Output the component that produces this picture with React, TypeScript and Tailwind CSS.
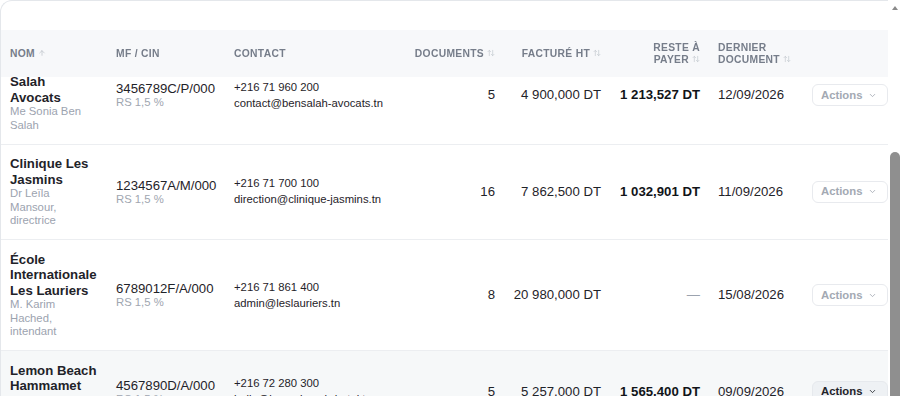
import { useLayoutEffect, useRef } from 'react';
import { ArrowUp, ArrowUpDown, ChevronDown } from 'lucide-react';

type Client = {
  name: string;
  contact: string;
  mf: string;
  phone: string;
  email: string;
  docs: number;
  billed: string;
  due: string | null;
  last: string;
};

const CLIENTS: Client[] = [
  { name: 'Cabinet Ben Salah Avocats', contact: 'Me Sonia Ben Salah', mf: '3456789C/P/000', phone: '+216 71 960 200', email: 'contact@bensalah-avocats.tn', docs: 5, billed: '4 900,000 DT', due: '1 213,527 DT', last: '12/09/2026' },
  { name: 'Clinique Les Jasmins', contact: 'Dr Leïla Mansour, directrice', mf: '1234567A/M/000', phone: '+216 71 700 100', email: 'direction@clinique-jasmins.tn', docs: 16, billed: '7 862,500 DT', due: '1 032,901 DT', last: '11/09/2026' },
  { name: 'École Internationale Les Lauriers', contact: 'M. Karim Hached, intendant', mf: '6789012F/A/000', phone: '+216 71 861 400', email: 'admin@leslauriers.tn', docs: 8, billed: '20 980,000 DT', due: null, last: '15/08/2026' },
  { name: 'Lemon Beach Hammamet', contact: 'M. Sami Chebbi, directeur général', mf: '4567890D/A/000', phone: '+216 72 280 300', email: 'hello@lemonbeach-hotel.tn', docs: 5, billed: '5 257,000 DT', due: '1 565,400 DT', last: '09/09/2026' },
  { name: 'Pharmacie Centrale El Menzah', contact: 'Dr Amel Trabelsi', mf: '7890123G/P/000', phone: '+216 71 230 455', email: 'pharmacie@elmenzah.tn', docs: 4, billed: '2 640,000 DT', due: '320,000 DT', last: '03/09/2026' },
];

const HOVERED = 3;

function SortIcon() {
  return <ArrowUpDown size={8} strokeWidth={2} className="inline-block ml-[3px] -mt-[2px] text-[#c3c8cf]" />;
}

function Row({ c, hovered }: { c: Client; hovered: boolean }) {
  return (
    <tr className={`border-b border-[#eceef1] ${hovered ? 'bg-[#f6f8f9]' : 'bg-white'}`}>
      <td className="px-[9px] py-[11.5px] align-middle">
        <div className="text-[13.2px] leading-[15.5px] font-bold text-[#1f2329]">{c.name}</div>
        <div className="text-[11.3px] leading-[13.5px] text-[#9ca3af]">{c.contact}</div>
      </td>
      <td className="px-[9px] align-middle">
        <div className="text-[13.2px] leading-[15px] text-[#1f2329]">{c.mf}</div>
        <div className="text-[11.3px] leading-[13px] text-[#a0a6b0]">RS 1,5 %</div>
      </td>
      <td className="px-[9px] align-middle text-[11.3px] leading-[13px] text-[#1f2329]">
        <div>{c.phone}</div>
        <div className="mt-[3px]">{c.email}</div>
      </td>
      <td className="px-[9px] align-middle text-right text-[13.2px] text-[#1f2329]">{c.docs}</td>
      <td className="px-[9px] align-middle text-right text-[13.2px] text-[#1f2329] whitespace-nowrap">{c.billed}</td>
      <td className="px-[9px] align-middle text-right text-[13.2px] whitespace-nowrap">
        {c.due ? <span className="font-bold text-[#111418]">{c.due}</span> : <span className="text-[#9ca3af]">—</span>}
      </td>
      <td className="px-[9px] align-middle text-[13.2px] text-[#1f2329]">{c.last}</td>
      <td className="px-[9px] align-middle">
        <button
          className={`h-[22px] flex items-center gap-[6px] pl-[8px] pr-[10px] rounded-md border text-[11.3px] font-bold ${
            hovered ? 'bg-[#eef1f4] border-[#e6e9ed] text-[#1f2329]' : 'bg-white border-[#e8eaee] text-[#a3a9b3]'
          }`}
        >
          Actions
          <ChevronDown size={9} strokeWidth={2.2} />
        </button>
      </td>
    </tr>
  );
}

// page scroll indicator on the right edge
function ScrollTrack() {
  return (
    <div className="w-[12px] shrink-0 bg-white flex flex-col items-center">
      <div className="mt-[6px] ml-[2px] w-0 h-0 border-x-[3.5px] border-x-transparent border-b-[4px] border-b-[#8a8a8a]" />
      <div className="mt-[142px] ml-[2px] w-[10px] h-[260px] rounded-t-[5px] bg-[#8f8f8f]" />
    </div>
  );
}

export default function App() {
  const scrollRef = useRef<HTMLDivElement>(null);
  const bodyRef = useRef<HTMLTableSectionElement>(null);

  useLayoutEffect(() => {
    const box = scrollRef.current;
    const body = bodyRef.current;
    if (!box || !body) return;
    box.scrollTop = body.getBoundingClientRect().top - box.getBoundingClientRect().top - 46.5;
  }, []);

  const th = 'px-[9px] py-3 align-middle text-[10.3px] leading-[11.5px] font-bold uppercase tracking-[0.03em] text-[#767d8a]';

  return (
    <div className="h-[396px] flex overflow-hidden bg-white font-['Liberation_Sans',Arial,sans-serif]">
      <div ref={scrollRef} className="flex-1 min-w-0 overflow-y-auto overflow-x-hidden [scrollbar-width:none]">
        <div className="w-[924px]">
          {/* card top, stays put while rows scroll */}
          <div className="sticky top-0 z-30 bg-white">
            <div className="h-[30px] rounded-tl-xl border-l border-t border-[#e4e7eb] bg-white" />
          </div>

          <div className="border-l border-[#e4e7eb] bg-white">
            <table className="w-[922px] table-fixed border-collapse">
              <colgroup>
                <col className="w-[106px]" />
                <col className="w-[118px]" />
                <col className="w-[178px]" />
                <col className="w-[101px]" />
                <col className="w-[106px]" />
                <col className="w-[99px]" />
                <col className="w-[94px]" />
                <col className="w-[120px]" />
              </colgroup>
              <thead className="sticky top-[30px] z-20">
                <tr className="bg-[#f7f8fa] border-b border-[#e8eaee] h-[47px]">
                  <th className={`${th} text-left`}>
                    Nom <ArrowUp size={8} strokeWidth={2} className="inline-block -mt-[2px] text-[#b9bec6]" />
                  </th>
                  <th className={`${th} text-left`}>MF / CIN</th>
                  <th className={`${th} text-left`}>Contact</th>
                  <th className={`${th} text-right`}>Documents<SortIcon /></th>
                  <th className={`${th} text-right`}>Facturé HT<SortIcon /></th>
                  <th className={`${th} text-right`}>Reste à payer<SortIcon /></th>
                  <th className={`${th} text-left`}>Dernier document<SortIcon /></th>
                  <th className={th} />
                </tr>
              </thead>
              <tbody ref={bodyRef}>
                {CLIENTS.map((c, i) => (
                  <Row key={c.mf} c={c} hovered={i === HOVERED} />
                ))}
              </tbody>
            </table>
          </div>
        </div>
      </div>
      <ScrollTrack />
    </div>
  );
}
